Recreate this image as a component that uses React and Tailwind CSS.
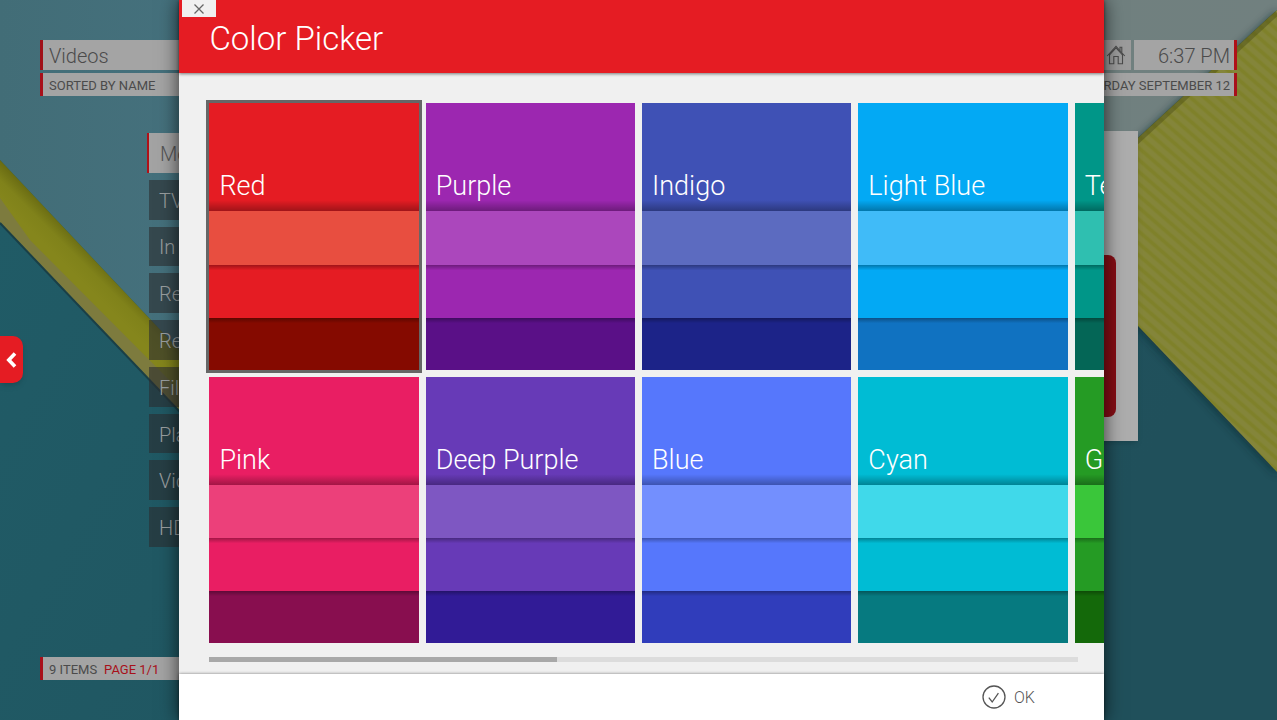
const palettes = [
  { name: "Red", tones: ["bg-[#e51c23]", "bg-[#e84e40]", "bg-[#e51c23]", "bg-[#850a00]"] },
  { name: "Pink", tones: ["bg-[#e91e63]", "bg-[#ec407a]", "bg-[#e91e63]", "bg-[#880e4f]"] },
  { name: "Purple", tones: ["bg-[#9c27b0]", "bg-[#ab47bc]", "bg-[#9c27b0]", "bg-[#5a1087]"] },
  { name: "Deep Purple", tones: ["bg-[#673ab7]", "bg-[#7e57c2]", "bg-[#673ab7]", "bg-[#311b96]"] },
  { name: "Indigo", tones: ["bg-[#3f51b5]", "bg-[#5c6bc0]", "bg-[#3f51b5]", "bg-[#1c2388]"] },
  { name: "Blue", tones: ["bg-[#5677fc]", "bg-[#738ffe]", "bg-[#5677fc]", "bg-[#303dbb]"] },
  { name: "Light Blue", tones: ["bg-[#03a9f4]", "bg-[#40bbf8]", "bg-[#03a9f4]", "bg-[#1072c1]"] },
  { name: "Cyan", tones: ["bg-[#00bcd4]", "bg-[#40d9ea]", "bg-[#00bcd4]", "bg-[#067a80]"] },
  { name: "Teal", tones: ["bg-[#009688]", "bg-[#2fbfb0]", "bg-[#009688]", "bg-[#046656]"] },
  { name: "Green", tones: ["bg-[#259b24]", "bg-[#3ac63a]", "bg-[#259b24]", "bg-[#14690a]"] },
];

const categories = [
  "Movies",
  "TV shows",
  "In progress",
  "Recently added movies",
  "Recently added episodes",
  "Files",
  "Playlists",
  "Video add-ons",
  "HDHomeRun",
];

function Wallpaper() {
  return (
    <svg
      className="absolute inset-0 h-full w-full"
      viewBox="0 0 1277 720"
      preserveAspectRatio="none"
      aria-hidden="true"
    >
      <defs>
        <linearGradient id="base" x1="0" y1="0" x2="1" y2="0.3">
          <stop offset="0" stopColor="#205c67" />
          <stop offset="1" stopColor="#20505b" />
        </linearGradient>
        <linearGradient id="sky" x1="0" y1="0" x2="1" y2="0">
          <stop offset="0" stopColor="#426d77" />
          <stop offset="0.2" stopColor="#46727f" />
          <stop offset="0.85" stopColor="#70807f" />
          <stop offset="1" stopColor="#71807f" />
        </linearGradient>
        <linearGradient id="band" gradientUnits="userSpaceOnUse" x1="60" y1="260" x2="80" y2="240">
          <stop offset="0" stopColor="#85861c" />
          <stop offset="0.5" stopColor="#80821a" />
          <stop offset="1" stopColor="#696b12" />
        </linearGradient>
        <pattern
          id="ribs"
          width="9"
          height="9"
          patternUnits="userSpaceOnUse"
          patternTransform="rotate(41)"
        >
          <rect width="9" height="9" fill="#84853a" />
          <rect y="1" width="9" height="5" fill="#828433" />
          <rect y="2" width="9" height="3" fill="#7f812a" />
        </pattern>
        <filter id="soft" x="-10%" y="-10%" width="120%" height="120%">
          <feGaussianBlur stdDeviation="4" />
        </filter>
      </defs>
      <rect width="1277" height="720" fill="url(#base)" />
      <path d="M0 0H1277V10L760 486L440 626L0 160Z" fill="url(#sky)" />
      <path d="M0 160L200 372V432L0 222Z" fill="url(#band)" />
      <path d="M0 198L30 240L200 411V432L0 222Z" fill="#7d7b3e" />
      <path d="M0 223L200 433" stroke="#1a3f47" strokeWidth="2" />
      <path d="M1100 173L1277 10V475L1100 289Z" fill="#10252a" opacity="0.6" filter="url(#soft)" />
      <path d="M1100 173L1277 10V472L1100 286Z" fill="url(#ribs)" />
      <path d="M1100 176L1277 13" stroke="#4c4e14" strokeWidth="5" opacity="0.45" />
    </svg>
  );
}

function HomeIcon() {
  return (
    <svg className="h-5 w-5" viewBox="0 0 20 20" fill="none" stroke="currentColor" strokeWidth="1.1" aria-hidden="true">
      <path d="M1.2 11L10 1.3L18.8 11" />
      <path d="M3.5 9V18.8H7.8V11.5H12.2V18.8H16.5V9" />
      <path d="M3.5 9.8L10 2.8L16.5 9.8" />
      <path d="M14 5.5V2.2H15.8V7.4" />
    </svg>
  );
}

function LibraryScreen() {
  return (
    <div className="relative flex min-h-screen flex-col justify-between py-10 text-[#4b4b4b]">
      <div>
        <header className="flex flex-col gap-[3px] px-10">
          <div className="flex h-[30px] gap-[3px] text-xl font-light">
            <h1 className="flex flex-1 items-center border-l-3 border-[#a01018] bg-[#a4a4a4] pt-0.5 pl-1.5">Videos</h1>
            <button type="button" aria-label="Home" className="flex w-[30px] items-center justify-center bg-[#9c9c9c]">
              <HomeIcon />
            </button>
            <time className="flex w-[103px] items-center justify-end border-r-3 border-[#b01018] bg-[#a4a4a4] pt-0.5 pr-1">
              6:37 PM
            </time>
          </div>
          <div className="flex h-[23px] items-center justify-between border-x-3 border-[#a8101a] bg-[#a4a4a4] pt-0.5 pr-1 pl-1.5 text-[13px]">
            <p>SORTED BY NAME</p>
            <p>SATURDAY SEPTEMBER 12</p>
          </div>
        </header>
        <main className="flex items-start justify-between pt-[35px] pr-[139px] pl-[147px]">
          <ul className="mt-0.5 grid h-[414px] w-72 grid-rows-9 gap-[7px] text-xl font-light">
            {categories.map((label, i) => (
              <li key={label} className="flex">
                <a
                  href="#"
                  className={
                    i === 0
                      ? "flex flex-1 items-center border-l-2 border-[#b01018] bg-[#a3a3a3] pt-0.5 pl-[11px] text-[#555]"
                      : "ml-0.5 flex flex-1 items-center bg-[#2b2d30]/60 pt-0.5 pl-2.5 text-[#9a9fa0]"
                  }
                >
                  {label}
                </a>
              </li>
            ))}
          </ul>
          <section aria-label="Preview" className="h-[310px] w-64 bg-[#adadad] px-[22px] pt-[124px] shadow-md">
            <div className="h-[162px] rounded-lg bg-[#860e15]" />
          </section>
        </main>
      </div>
      <footer className="px-10">
        <p className="mr-[500px] flex h-[23px] items-center gap-[7px] border-l-3 border-[#a8101a] bg-[#a4a4a4] pt-0.5 pl-1.5 text-[13px]">
          <span>9 ITEMS</span>
          <span className="text-[#a8101a]">PAGE 1/1</span>
        </p>
      </footer>
      <button
        type="button"
        aria-label="Open side menu"
        className="absolute top-[336px] left-0 flex h-[47px] w-[23px] items-center justify-center rounded-r-[10px] bg-[#e51c23] text-white shadow-md"
      >
        <svg className="h-4 w-3" viewBox="0 0 12 16" fill="none" stroke="currentColor" strokeWidth="3.6" aria-hidden="true">
          <path d="M9 1.5L2.8 8L9 14.5" />
        </svg>
      </button>
    </div>
  );
}

function Swatch({ name, tones, selected }) {
  return (
    <button
      type="button"
      aria-pressed={selected}
      className={
        selected
          ? "grid grid-rows-[108fr_54fr_53fr_52fr] text-left outline-3 outline-[#666]"
          : "grid grid-rows-[108fr_54fr_53fr_52fr] text-left"
      }
    >
      <span className={`flex items-end bg-linear-to-t from-black/30 to-transparent to-10% px-2.5 pb-[7px] text-[27px] leading-9 font-light text-white ${tones[0]}`}>
        {name}
      </span>
      <span className={tones[1]} />
      <span className={`bg-linear-to-b from-black/30 to-transparent to-10% ${tones[2]}`} />
      <span className={`bg-linear-to-b from-black/30 to-transparent to-10% ${tones[3]}`} />
    </button>
  );
}

function ColorPicker() {
  return (
    <div
      role="dialog"
      aria-labelledby="picker-title"
      className="absolute inset-y-0 right-[13.55%] left-[14.05%] flex flex-col bg-[#f0f0f0] shadow-[0_0_18px_rgba(0,0,0,0.7)]"
    >
      <header className="relative flex h-[73px] items-center bg-[#e51c23] pt-1 pl-[30px] shadow-[0_1px_3px_rgba(0,0,0,0.5)]">
        <h2 id="picker-title" className="text-[33px] leading-11 font-light text-white">
          Color Picker
        </h2>
        <button
          type="button"
          aria-label="Close"
          className="absolute top-0 left-[3px] flex h-[17px] w-[34px] items-center justify-center bg-[#f0f0f0] text-[#666]"
        >
          <svg className="h-2.5 w-2.5" viewBox="0 0 10 10" fill="none" stroke="currentColor" strokeWidth="1.3" aria-hidden="true">
            <path d="M0.5 0.5L9.5 9.5M9.5 0.5L0.5 9.5" />
          </svg>
        </button>
      </header>
      <div className="flex-1">
        <div className="grid auto-cols-[23.4%] grid-flow-col grid-rows-[267px_266px] gap-[7px] overflow-hidden pt-[30px] pl-[30px]">
          {palettes.map((p, i) => (
            <Swatch key={p.name} name={p.name} tones={p.tones} selected={i === 0} />
          ))}
        </div>
        <div className="mt-3.5 mr-[26px] ml-[30px] h-[5px] bg-[#dcdcdc]">
          <div className="h-full w-2/5 bg-[#a8a8a8]" />
        </div>
      </div>
      <footer className="flex h-[46px] items-center justify-end bg-white pr-[69px] shadow-[0_0_3px_rgba(0,0,0,0.5)]">
        <button type="button" className="flex items-center gap-2 text-base font-light text-[#555]">
          <svg className="h-6 w-6" viewBox="0 0 24 24" fill="none" stroke="currentColor" strokeWidth="1.3" aria-hidden="true">
            <circle cx="12" cy="12" r="11" />
            <path d="M6.8 12.6L10.2 17L16.4 8.2" />
          </svg>
          <span className="pt-0.5">OK</span>
        </button>
      </footer>
    </div>
  );
}

export default function App() {
  return (
    <div className="relative min-h-screen overflow-hidden bg-[#205a65] font-['Roboto',sans-serif]">
      <Wallpaper />
      <LibraryScreen />
      <ColorPicker />
    </div>
  );
}
